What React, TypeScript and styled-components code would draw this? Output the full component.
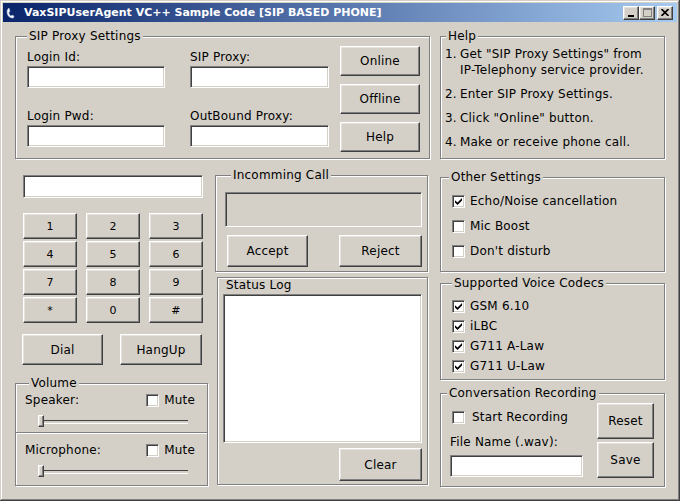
import styled, { createGlobalStyle, css } from "styled-components";

const GlobalStyle = createGlobalStyle`
  html, body {
    margin: 0;
    padding: 0;
    background: #d4d0c8;
  }
  body {
    font-family: "DejaVu Sans", Tahoma, sans-serif;
    font-size: 12px;
    letter-spacing: 0.2px;
    color: #000;
  }
  * {
    box-sizing: border-box;
  }
  button, input {
    font: inherit;
    letter-spacing: inherit;
    color: inherit;
  }
`;

const raised = css`
  border: 1px solid;
  border-color: #fff #404040 #404040 #fff;
  box-shadow: inset -1px -1px 0 #808080, inset 1px 1px 0 #e6e3de;
  background: #d4d0c8;
`;

const sunken = css`
  border: 1px solid;
  border-color: #808080 #fff #fff #808080;
  box-shadow: inset 1px 1px 0 #404040, inset -1px -1px 0 #d4d0c8;
`;

const Window = styled.div`
  width: 680px;
  height: 501px;
  padding: 3px;
  background: #d4d0c8;
  display: flex;
  flex-direction: column;
  overflow: hidden;
  box-shadow: inset -1px -1px 0 #404040, inset 1px 1px 0 #d4d0c8,
    inset -2px -2px 0 #808080, inset 2px 2px 0 #fff;
`;

const TitleBar = styled.div`
  flex: none;
  height: 19px;
  display: flex;
  align-items: center;
  padding: 0 4px 0 2px;
  background: linear-gradient(to right, #0a246a, #a6caf0);
`;

const TitleText = styled.span`
  flex: 1;
  margin-left: 5px;
  color: #fff;
  font-weight: bold;
  font-size: 11px;
  letter-spacing: 0;
  white-space: nowrap;
`;

const CaptionButton = styled.button<{ $gap?: number }>`
  ${raised};
  width: 16px;
  height: 14px;
  padding: 0;
  margin-left: ${(p) => p.$gap ?? 0}px;
  display: flex;
  align-items: center;
  justify-content: center;
`;

const Body = styled.div`
  flex: 1;
  padding: 14px 12px 0 12px;
`;

const TopRow = styled.div`
  display: flex;
  gap: 10px;
`;

const LowerRow = styled.div`
  display: flex;
  align-items: flex-start;
`;

const Column = styled.div<{ $w: number; $ml?: number }>`
  width: ${(p) => p.$w}px;
  margin-left: ${(p) => p.$ml ?? 0}px;
  display: flex;
  flex-direction: column;
`;

const Group = styled.div<{ $w?: number; $h: number; $mt?: number; $ml?: number }>`
  position: relative;
  width: ${(p) => (p.$w ? `${p.$w}px` : "100%")};
  height: ${(p) => p.$h}px;
  margin-top: ${(p) => p.$mt ?? 0}px;
  margin-left: ${(p) => p.$ml ?? 0}px;
  border: 1px solid #808080;
  box-shadow: inset 1px 1px 0 #fff, 1px 1px 0 #fff;
`;

const Caption = styled.span<{ $x: number }>`
  position: absolute;
  top: -8px;
  left: ${(p) => p.$x}px;
  padding: 0 2px;
  line-height: 15px;
  background: #d4d0c8;
  white-space: nowrap;
`;

const Button = styled.button<{ $w: number; $h: number }>`
  ${raised};
  width: ${(p) => p.$w}px;
  height: ${(p) => p.$h}px;
  padding: 0;
  flex: none;
  cursor: default;
`;

const TextBox = styled.input<{ $w?: number }>`
  ${sunken};
  display: block;
  width: ${(p) => (p.$w ? `${p.$w}px` : "100%")};
  height: 22px;
  background: #fff;
  padding: 2px 3px;
  outline: none;
`;

const Label = styled.div`
  line-height: 14px;
  height: 14px;
  white-space: nowrap;
`;

/* SIP proxy settings */

const SipBody = styled.div`
  display: flex;
  padding-left: 11px;
`;

const FieldGrid = styled.div`
  display: grid;
  grid-template-columns: 138px 139px;
  column-gap: 25px;
  row-gap: 16px;
  padding-top: 13px;
`;

const Field = styled.div`
  display: flex;
  flex-direction: column;
  gap: 2px;
`;

const ButtonStack = styled.div<{ $gap: number; $pt: number; $ml: number }>`
  display: flex;
  flex-direction: column;
  gap: ${(p) => p.$gap}px;
  padding-top: ${(p) => p.$pt}px;
  margin-left: ${(p) => p.$ml}px;
`;

/* Help */

const HelpList = styled.div`
  padding: 9px 0 0 4px;
  display: flex;
  flex-direction: column;
  gap: 8px;
  line-height: 16px;
`;

const HelpItem = styled.div`
  display: flex;
  white-space: nowrap;
`;

const HelpNum = styled.span`
  width: 15px;
  flex: none;
`;

/* Dial pad */

const PhoneBox = styled(TextBox)`
  height: 23px;
  margin: 16px 0 0 8px;
`;

const Keypad = styled.div`
  display: grid;
  grid-template-columns: repeat(3, 54px);
  grid-auto-rows: 26px;
  column-gap: 9px;
  row-gap: 2px;
  margin: 15px 0 0 8px;
`;

const KeyButton = styled.button`
  ${raised};
  padding: 0;
  font-size: 11px;
  cursor: default;
`;

const DialRow = styled.div`
  display: flex;
  gap: 17px;
  margin: 11px 0 0 7px;
`;

/* Volume */

const VolRow = styled.div<{ $mt: number }>`
  display: flex;
  align-items: center;
  justify-content: space-between;
  height: 16px;
  margin-top: ${(p) => p.$mt}px;
  padding: 0 12px 0 9px;
`;

const CheckLine = styled.label<{ $gap?: number }>`
  display: flex;
  align-items: center;
  gap: ${(p) => p.$gap ?? 5}px;
  height: 16px;
  white-space: nowrap;
`;

const Box = styled.span`
  ${sunken};
  width: 13px;
  height: 13px;
  flex: none;
  background: #fff;
  display: flex;
  align-items: center;
  justify-content: center;
`;

const SliderTrack = styled.div<{ $mt: number }>`
  position: relative;
  width: 150px;
  height: 12px;
  margin: ${(p) => p.$mt}px 0 0 22px;

  &::before {
    content: "";
    position: absolute;
    left: 2px;
    right: 0;
    top: 5px;
    height: 2px;
    border-top: 1px solid #404040;
    border-bottom: 1px solid #fff;
  }
`;

const Thumb = styled.span`
  ${raised};
  position: absolute;
  left: 0;
  top: 0;
  width: 6px;
  height: 12px;
`;

const Separator = styled.div`
  height: 2px;
  margin-top: 5px;
  border-top: 1px solid #808080;
  border-bottom: 1px solid #fff;
`;

/* Middle column */

const CallBody = styled.div`
  padding: 16px 5px 0 9px;
`;

const CallDisplay = styled.div`
  ${sunken};
  height: 35px;
  background: #d4d0c8;
`;

const CallButtons = styled.div`
  display: flex;
  justify-content: space-between;
  margin: 8px 0 0 2px;
`;

const StatusPanel = styled.div`
  width: 211px;
  height: 208px;
  margin: 5px 0 0 2px;
  border: 1px solid #808080;
  box-shadow: inset 1px 1px 0 #fff, 1px 1px 0 #fff;
  display: flex;
  flex-direction: column;
`;

const StatusLabel = styled(Label)`
  margin-left: 8px;
`;

const LogBox = styled.div`
  ${sunken};
  width: 199px;
  height: 149px;
  margin: 2px 0 0 5px;
  background: #fff;
`;

const ClearRow = styled.div`
  display: flex;
  justify-content: flex-end;
  padding-right: 5px;
  margin-top: 5px;
`;

/* Right column */

const CheckList = styled.div<{ $pt: number; $gap: number }>`
  display: flex;
  flex-direction: column;
  gap: ${(p) => p.$gap}px;
  padding: ${(p) => p.$pt}px 0 0 11px;
`;

const RecordBody = styled.div`
  display: flex;
`;

const RecordLeft = styled.div`
  width: 156px;
  padding: 15px 0 0 11px;
  display: flex;
  flex-direction: column;
`;

const FileBlock = styled.div`
  margin: 10px 0 0 -2px;
`;

const FileLabel = styled(Label)`
  margin-bottom: 6px;
`;

const CheckMark = () => (
  <svg width="7" height="7" viewBox="0 0 7 7">
    <path d="M0 2.2 L2.5 4.6 L7 0 L7 2.6 L2.5 7 L0 4.6 Z" fill="#000" />
  </svg>
);

const Check = ({ label, checked, gap }: { label: string; checked?: boolean; gap?: number }) => (
  <CheckLine $gap={gap}>
    <Box>{checked && <CheckMark />}</Box>
    <span>{label}</span>
  </CheckLine>
);

const Slider = ({ mt }: { mt: number }) => (
  <SliderTrack $mt={mt}>
    <Thumb />
  </SliderTrack>
);

const AppIcon = () => (
  <svg width="14" height="14" viewBox="0 0 14 14">
    <path
      d="M4 2 C2 3 1.5 6 2.5 8.5 C3.5 11 6 12.5 8.5 12 L9 10 L7 9 L6 10 C5 9.5 4 8 3.8 6.5 L5 5.5 L4.5 3.5 Z"
      fill="#fff"
      stroke="#9fb4d8"
      strokeWidth="0.6"
    />
  </svg>
);

const keys = ["1", "2", "3", "4", "5", "6", "7", "8", "9", "*", "0", "#"];

export default function App() {
  return (
    <>
      <GlobalStyle />
      <Window>
        <TitleBar>
          <AppIcon />
          <TitleText>VaxSIPUserAgent VC++ Sample Code [SIP BASED PHONE]</TitleText>
          <CaptionButton aria-label="minimize">
            <svg width="8" height="8" viewBox="0 0 8 8">
              <rect x="1" y="6" width="6" height="2" fill="#000" />
            </svg>
          </CaptionButton>
          <CaptionButton aria-label="maximize">
            <svg width="9" height="9" viewBox="0 0 9 9">
              <rect x="0.5" y="0.5" width="8" height="8" fill="none" stroke="#808080" />
              <rect x="0" y="0" width="9" height="2" fill="#808080" />
            </svg>
          </CaptionButton>
          <CaptionButton aria-label="close" $gap={2}>
            <svg width="8" height="7" viewBox="0 0 8 7">
              <path d="M0.5 0 L7.5 7 M7.5 0 L0.5 7" stroke="#000" strokeWidth="1.6" />
            </svg>
          </CaptionButton>
        </TitleBar>

        <Body>
          <TopRow>
            <Group $w={415} $h={123}>
              <Caption $x={11}>SIP Proxy Settings</Caption>
              <SipBody>
                <FieldGrid>
                  <Field>
                    <Label>Login Id:</Label>
                    <TextBox />
                  </Field>
                  <Field>
                    <Label>SIP Proxy:</Label>
                    <TextBox />
                  </Field>
                  <Field>
                    <Label>Login Pwd:</Label>
                    <TextBox type="password" />
                  </Field>
                  <Field>
                    <Label>OutBound Proxy:</Label>
                    <TextBox />
                  </Field>
                </FieldGrid>
                <ButtonStack $gap={8} $pt={9} $ml={11}>
                  <Button $w={80} $h={30}>Online</Button>
                  <Button $w={80} $h={30}>Offline</Button>
                  <Button $w={80} $h={30}>Help</Button>
                </ButtonStack>
              </SipBody>
            </Group>

            <Group $w={225} $h={123}>
              <Caption $x={5}>Help</Caption>
              <HelpList>
                <HelpItem>
                  <HelpNum>1.</HelpNum>
                  <span>
                    Get "SIP Proxy Settings" from
                    <br />
                    IP-Telephony service provider.
                  </span>
                </HelpItem>
                <HelpItem>
                  <HelpNum>2.</HelpNum>
                  <span>Enter SIP Proxy Settings.</span>
                </HelpItem>
                <HelpItem>
                  <HelpNum>3.</HelpNum>
                  <span>Click "Online" button.</span>
                </HelpItem>
                <HelpItem>
                  <HelpNum>4.</HelpNum>
                  <span>Make or receive phone call.</span>
                </HelpItem>
              </HelpList>
            </Group>
          </TopRow>

          <LowerRow>
            <Column $w={197}>
              <PhoneBox $w={180} />
              <Keypad>
                {keys.map((k) => (
                  <KeyButton key={k}>{k}</KeyButton>
                ))}
              </Keypad>
              <DialRow>
                <Button $w={81} $h={31}>Dial</Button>
                <Button $w={82} $h={31}>HangUp</Button>
              </DialRow>
              <Group $w={193} $h={103} $mt={18}>
                <Caption $x={13}>Volume</Caption>
                <VolRow $mt={8}>
                  <span>Speaker:</span>
                  <Check label="Mute" />
                </VolRow>
                <Slider mt={7} />
                <Separator />
                <VolRow $mt={8}>
                  <span>Microphone:</span>
                  <Check label="Mute" />
                </VolRow>
                <Slider mt={7} />
              </Group>
            </Column>

            <Column $w={213} $ml={3}>
              <Group $h={97} $mt={16}>
                <Caption $x={15}>Incomming Call</Caption>
                <CallBody>
                  <CallDisplay />
                  <CallButtons>
                    <Button $w={81} $h={32}>Accept</Button>
                    <Button $w={83} $h={32}>Reject</Button>
                  </CallButtons>
                </CallBody>
              </Group>
              <StatusPanel>
                <StatusLabel>Status Log</StatusLabel>
                <LogBox />
                <ClearRow>
                  <Button $w={83} $h={33}>Clear</Button>
                </ClearRow>
              </StatusPanel>
            </Column>

            <Column $w={225} $ml={12}>
              <Group $h={95} $mt={18}>
                <Caption $x={8}>Other Settings</Caption>
                <CheckList $pt={15} $gap={9}>
                  <Check label="Echo/Noise cancellation" checked />
                  <Check label="Mic Boost" />
                  <Check label="Don't disturb" />
                </CheckList>
              </Group>
              <Group $h={97} $mt={11}>
                <Caption $x={11}>Supported Voice Codecs</Caption>
                <CheckList $pt={14} $gap={4}>
                  <Check label="GSM 6.10" checked />
                  <Check label="iLBC" checked />
                  <Check label="G711 A-Law" checked />
                  <Check label="G711 U-Law" checked />
                </CheckList>
              </Group>
              <Group $h={94} $mt={13}>
                <Caption $x={6}>Conversation Recording</Caption>
                <RecordBody>
                  <RecordLeft>
                    <Check label="Start Recording" gap={7} />
                    <FileBlock>
                      <FileLabel>File Name (.wav):</FileLabel>
                      <TextBox $w={133} />
                    </FileBlock>
                  </RecordLeft>
                  <ButtonStack $gap={3} $pt={9} $ml={0}>
                    <Button $w={57} $h={36}>Reset</Button>
                    <Button $w={57} $h={36}>Save</Button>
                  </ButtonStack>
                </RecordBody>
              </Group>
            </Column>
          </LowerRow>
        </Body>
      </Window>
    </>
  );
}
